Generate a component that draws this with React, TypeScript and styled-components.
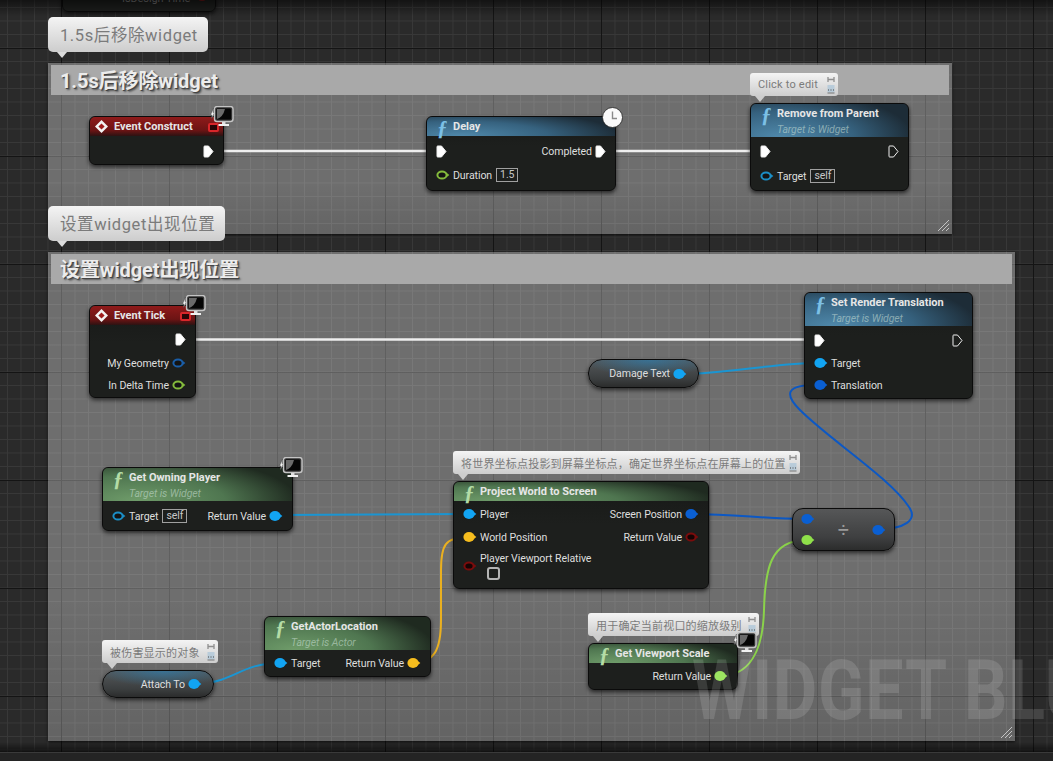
import React from "react";
import styled, { createGlobalStyle } from "styled-components";

const GlobalStyle = createGlobalStyle`
  html, body { margin: 0; padding: 0; background: #232323; }
  body { font-family: Roboto, "Noto Sans CJK SC", sans-serif; }
`;

const Page = styled.div`
  width: 1053px;
  height: 761px;
  display: flex;
  flex-direction: column;
  overflow: hidden;
`;

const Canvas = styled.div`
  position: relative;
  flex: 1;
  overflow: hidden;
  background-color: #2a2a2a;
  background-image:
    linear-gradient(to right, #141414 1px, transparent 1px),
    linear-gradient(to bottom, #141414 1px, transparent 1px),
    linear-gradient(to right, #383838 1px, transparent 1px),
    linear-gradient(to bottom, #383838 1px, transparent 1px);
  background-size: 108px 108px, 108px 108px, 13.5px 13.5px, 13.5px 13.5px;
  background-position: 61px 48px, 61px 48px, 7px 7px, 7px 7px;
  &::after {
    content: "";
    position: absolute;
    inset: 0;
    pointer-events: none;
    background:
      linear-gradient(to bottom, rgba(0, 0, 0, 0.55), transparent 16px),
      linear-gradient(to top, rgba(0, 0, 0, 0.6), transparent 10px);
  }
`;

const StatusBar = styled.div`
  height: 8px;
  background: #242424;
  border-top: 1px solid #3a3a3a;
`;

const Comment = styled.div<{ $x: number; $y: number; $w: number; $h: number }>`
  position: absolute;
  left: ${(p) => p.$x}px;
  top: ${(p) => p.$y}px;
  width: ${(p) => p.$w}px;
  height: ${(p) => p.$h}px;
  box-sizing: border-box;
  padding: 2px 3px;
  background: linear-gradient(to bottom, rgba(255, 255, 255, 0.32) 70%, rgba(255, 255, 255, 0.27));
  box-shadow: 0 1px 3px rgba(0, 0, 0, 0.7);
`;

const CommentTitle = styled.div`
  height: 30px;
  line-height: 32px;
  padding-left: 9px;
  background: #a9a9a9;
  color: #ececec;
  font-size: 20px;
  font-weight: 700;
  letter-spacing: -0.1px;
  text-shadow: 1px 1px 0 #444, 2px 2px 2px rgba(0, 0, 0, 0.5);
`;

const ResizeGrip = styled.svg`
  position: absolute;
  right: 2px;
  bottom: 2px;
`;

const Wires = styled.svg`
  position: absolute;
  left: 0;
  top: 0;
`;

const Node = styled.div<{ $x: number; $y: number; $w: number; $h: number }>`
  position: absolute;
  left: ${(p) => p.$x}px;
  top: ${(p) => p.$y}px;
  width: ${(p) => p.$w}px;
  height: ${(p) => p.$h}px;
  box-sizing: border-box;
  border: 1px solid #0b0b0b;
  border-radius: 6px;
  background: linear-gradient(to bottom, #171917, #1d1f1d 40%);
  box-shadow: 0 2px 4px rgba(0, 0, 0, 0.65);
  color: #dedede;
  font-size: 10.6px;
  letter-spacing: -0.1px;
`;

const headerColors = {
  red: "linear-gradient(to bottom, #8f1a1a, #6c1414 70%, #2c1212)",
  blue: "radial-gradient(ellipse 85% 140% at 18% 100%, #4f88aa, #36627f 55%, #1d2c37 100%)",
  green: "radial-gradient(ellipse 85% 140% at 18% 100%, #6f9c6a, #4f7650 55%, #1f2a20 100%)",
};

const Header = styled.div<{ $tone: keyof typeof headerColors; $h: number }>`
  height: ${(p) => p.$h}px;
  box-sizing: border-box;
  display: flex;
  align-items: flex-start;
  padding: 2px 6px 0 ${(p) => (p.$tone === "red" ? 4 : 10)}px;
  gap: ${(p) => (p.$tone === "red" ? 5 : 3)}px;
  border-radius: 5px 5px 0 0;
  background: ${(p) => headerColors[p.$tone]};
`;

const FuncIcon = styled.span<{ $tone: "blue" | "green" }>`
  font-family: "Liberation Serif", serif;
  font-style: italic;
  font-weight: 700;
  font-size: 21px;
  line-height: 18px;
  width: 13px;
  color: ${(p) => (p.$tone === "blue" ? "#7cc0e6" : "#b4dca6")};
`;

const HeaderText = styled.div`
  display: flex;
  flex-direction: column;
`;

const Title = styled.span`
  font-weight: 700;
  font-size: 11px;
  letter-spacing: 0;
  line-height: 16px;
  color: #e6e6e6;
  white-space: nowrap;
`;

const Subtitle = styled.span`
  font-style: italic;
  font-size: 10.5px;
  line-height: 15px;
  color: rgba(205, 225, 215, 0.55);
  white-space: nowrap;
`;

const Body = styled.div`
  padding: 0 9px;
`;

const Row = styled.div<{ $h: number }>`
  height: ${(p) => p.$h}px;
  display: flex;
  align-items: center;
  justify-content: space-between;
  white-space: nowrap;
`;

const Side = styled.div`
  display: flex;
  align-items: center;
  gap: 3px;
`;

const Literal = styled.span`
  border: 1px solid #a0a0a0;
  line-height: 12px;
  padding: 0 3px;
  margin-left: 1px;
  font-size: 10.5px;
  color: #c8c8c8;
`;

const Checkbox = styled.span`
  display: block;
  width: 9px;
  height: 9px;
  margin: 2px 0 0 7px;
  border: 2px solid #b4b4b4;
  border-radius: 3px;
`;

const StackedPin = styled.div`
  display: flex;
  align-items: center;
  gap: 3px;
  margin-top: 5px;
  white-space: nowrap;
`;

const DelegatePin = styled.span`
  position: absolute;
  right: 4px;
  top: 6px;
  width: 7px;
  height: 5px;
  border: 2px solid #d8262a;
  border-radius: 2px;
  background: #2a0606;
`;

const Badge = styled.span<{ $right: number; $top: number }>`
  position: absolute;
  right: ${(p) => p.$right}px;
  top: ${(p) => p.$top}px;
  display: flex;
`;

const Pill = styled.div<{ $x: number; $y: number; $w: number; $h: number }>`
  position: absolute;
  left: ${(p) => p.$x}px;
  top: ${(p) => p.$y}px;
  width: ${(p) => p.$w}px;
  height: ${(p) => p.$h}px;
  box-sizing: border-box;
  display: flex;
  align-items: center;
  justify-content: flex-end;
  gap: 3px;
  padding-right: 11px;
  border: 1px solid #0b0b0b;
  border-radius: 14px;
  background:
    radial-gradient(ellipse 60% 60% at 55% 0%, rgba(40, 130, 185, 0.6), transparent),
    linear-gradient(to bottom, #54585a, #3b3e3f 70%, #2b2c2c);
  box-shadow: 0 2px 4px rgba(0, 0, 0, 0.65);
  color: #dedede;
  font-size: 10.6px;
  letter-spacing: -0.1px;
`;

const DivideNode = styled.div<{ $x: number; $y: number }>`
  position: absolute;
  left: ${(p) => p.$x}px;
  top: ${(p) => p.$y}px;
  width: 103px;
  height: 43px;
  box-sizing: border-box;
  display: flex;
  align-items: center;
  justify-content: space-between;
  padding: 0 8px 0 8px;
  border: 1px solid #0b0b0b;
  border-radius: 11px;
  background: linear-gradient(to bottom, #565758, #3e3f40 70%, #2b2c2c);
  box-shadow: 0 2px 4px rgba(0, 0, 0, 0.65);
`;

const DivideInputs = styled.div`
  display: flex;
  flex-direction: column;
  gap: 9px;
`;

const DivideSign = styled.span`
  font-size: 20px;
  line-height: 20px;
  color: #9a9a9a;
`;

const Bubble = styled.div<{ $x: number; $y: number; $w: number; $big?: boolean }>`
  position: absolute;
  left: ${(p) => p.$x}px;
  top: ${(p) => p.$y}px;
  width: ${(p) => p.$w}px;
  height: ${(p) => (p.$big ? 35 : 23)}px;
  box-sizing: border-box;
  display: flex;
  align-items: center;
  justify-content: space-between;
  padding: 0 ${(p) => (p.$big ? 10 : 3)}px ${(p) => (p.$big ? 2 : 0)}px ${(p) => (p.$big ? 12 : 8)}px;
  border-radius: ${(p) => (p.$big ? 5 : 3)}px;
  background: linear-gradient(to bottom, #f4f4f4, #cdcdcd);
  color: #7b7b7b;
  font-size: ${(p) => (p.$big ? 16.5 : 11)}px;
  letter-spacing: ${(p) => (p.$big ? 0.6 : 0.2)}px;
  white-space: nowrap;
  &::after {
    content: "";
    position: absolute;
    left: ${(p) => (p.$big ? 9 : 5)}px;
    top: 100%;
    border: 5px solid transparent;
    border-top: 6px solid ${(p) => (p.$big ? "#dcdcdc" : "#cdcdcd")};
    border-bottom: 0;
  }
`;

const Watermark = styled.div`
  position: absolute;
  left: 692px;
  top: 641px;
  font-family: Roboto, sans-serif;
  font-weight: 700;
  font-size: 84px;
  line-height: 100px;
  letter-spacing: 1px;
  white-space: nowrap;
  color: rgba(255, 255, 255, 0.13);
  transform: scaleX(0.81);
  transform-origin: left top;
  pointer-events: none;
`;

const CutText = styled.span`
  position: absolute;
  left: 59px;
  top: 31px;
  font-size: 11px;
  line-height: 14px;
  color: #7d7d7d;
`;

const CutPin = styled.span`
  position: absolute;
  left: 135px;
  top: 34px;
  width: 8px;
  height: 6px;
  border-radius: 50%;
  background: #7a1818;
`;

const C = {
  object: "#12a4f2",
  objectRing: "#1b8ec6",
  vector: "#0a5fd2",
  geometry: "#1a5ea8",
  float: "#8fe04a",
  floatRing: "#84bb3c",
  yellow: "#f6bd1e",
  bool: "#7a0c0c",
};

function DataPin({ color, hollow }: { color: string; hollow?: boolean }) {
  return (
    <svg width="14" height="12" viewBox="0 0 14 12">
      <path d="M10 3.6 L13.4 6 L10 8.4 Z" fill={color} />
      {hollow ? (
        <ellipse cx="6" cy="6" rx="4.6" ry="3.6" fill="#141414" stroke={color} strokeWidth="2" />
      ) : (
        <ellipse cx="6" cy="6" rx="5.6" ry="4.9" fill={color} />
      )}
    </svg>
  );
}

function BoolPin() {
  return (
    <svg width="14" height="12" viewBox="0 0 14 12">
      <path d="M10 3.6 L13.4 6 L10 8.4 Z" fill={C.bool} />
      <ellipse cx="6" cy="6" rx="4.6" ry="3.6" fill="#160404" stroke={C.bool} strokeWidth="2" />
    </svg>
  );
}

function ExecPin({ hollow }: { hollow?: boolean }) {
  return (
    <svg width="11" height="13" viewBox="0 0 11 13">
      <path
        d="M1.5 1 H5.5 L10 6.5 L5.5 12 H1.5 Q1 12 1 11 V2 Q1 1 1.5 1 Z"
        fill={hollow ? "none" : "#fff"}
        stroke="#f0f0f0"
        strokeWidth="1"
      />
    </svg>
  );
}

function MonitorBadge() {
  return (
    <svg width="25" height="22" viewBox="0 0 25 22">
      <path d="M4.5 2 L1.5 9 H3 L2.5 13 L5.5 6.5 H4 Z" fill="#f2f2f2" stroke="#333" strokeWidth="0.4" />
      <rect x="5.5" y="0.5" width="18.5" height="15" rx="2.5" fill="#333" stroke="#c4c4c4" strokeWidth="1.4" />
      <rect x="7.5" y="2.5" width="14.5" height="11" rx="1" fill="#050505" />
      <path d="M8 13 Q14 11 16 3 H8 Z" fill="#6a6a6a" />
      <rect x="13" y="16" width="3.5" height="2" fill="#dedede" />
      <rect x="9.5" y="18" width="10.5" height="2" fill="#f2f2f2" />
    </svg>
  );
}

function ClockBadge() {
  return (
    <svg width="21" height="21" viewBox="0 0 21 21">
      <circle cx="10.5" cy="10.5" r="10" fill="#fafafa" stroke="#222" strokeWidth="0.8" />
      <path d="M10.5 4.5 V11.5 H15" fill="none" stroke="#8a8a8a" strokeWidth="1.4" />
    </svg>
  );
}

function EventIcon() {
  return (
    <svg width="15" height="15" viewBox="0 0 15 15">
      <path d="M7.5 1 L14 7.5 L7.5 14 L1 7.5 Z" fill="#f4f4f4" />
      <path d="M7.5 4.4 L10.6 7.5 L7.5 10.6 L4.4 7.5 Z" fill="#a01e1e" />
    </svg>
  );
}

function BubbleIcons() {
  return (
    <svg width="8" height="20" viewBox="0 0 8 20">
      <path d="M1 2 V7 M7 2 V7 M1.5 4.5 H6.5" stroke="#8f8f8f" strokeWidth="1.3" fill="none" />
      <rect x="0.5" y="10" width="7" height="7.5" fill="#a9c4d8" opacity="0.7" />
      <path d="M1 15 H2 M3.5 15 H4.5 M6 15 H7" stroke="#444" strokeWidth="1" />
      <path d="M0.5 18 H7.5" stroke="#777" strokeWidth="1" />
    </svg>
  );
}

function Grip() {
  return (
    <ResizeGrip width="13" height="13" viewBox="0 0 13 13">
      <path d="M1 12 L12 1 M5 12 L12 5 M9 12 L12 9" stroke="#c4c4c4" strokeWidth="1" />
    </ResizeGrip>
  );
}

const Label = styled.span``;

export default function App() {
  return (
    <Page>
      <GlobalStyle />
      <Canvas>
        <Node $x={62} $y={-40} $w={154} $h={52}>
          <CutText>IsDesign Time</CutText>
          <CutPin />
        </Node>

        <Comment $x={48} $y={63} $w={904} $h={171}>
          <CommentTitle>1.5s后移除widget</CommentTitle>
          <Grip />
        </Comment>
        <Comment $x={48} $y={252} $w={967} $h={489}>
          <CommentTitle>设置widget出现位置</CommentTitle>
          <Grip />
        </Comment>

        <Wires width="1053" height="752" viewBox="0 0 1053 752" fill="none">
          <g stroke="#eeeeee" strokeWidth="2.6">
            <path d="M222 151 H430" />
            <path d="M612 151 H756" />
            <path d="M194 339.5 H810" />
          </g>
          <g stroke="#1a95d2" strokeWidth="2">
            <path d="M277 515 C 340 515, 400 514, 469 514" />
            <path d="M682 374 C 730 374, 770 363, 820 363" />
            <path d="M195 684 C 232 684, 240 663, 280 663" />
          </g>
          <g stroke="#0c58c4" strokeWidth="2">
            <path d="M690 514 C 740 514, 760 519, 806 519" />
            <path d="M878 529 C 905 529, 918 520, 909 507 C 890 478, 830 440, 800 410 C 784 394, 786 385, 816 385" />
          </g>
          <path d="M413 663 C 434 663, 441 650, 441 620 L441 570 C 441 545, 445 537, 469 537" stroke="#eab020" strokeWidth="2" />
          <path d="M720 676 C 750 676, 763 650, 764 610 C 765 570, 770 540, 806 540" stroke="#8ad24a" strokeWidth="2" />
        </Wires>

        <Bubble $x={48} $y={17} $w={160} $big>1.5s后移除widget</Bubble>
        <Bubble $x={48} $y={206} $w={177} $big>设置widget出现位置</Bubble>

        <Node $x={89} $y={116} $w={135} $h={49}>
          <Header $tone="red" $h={19}>
            <EventIcon />
            <Title>Event Construct</Title>
          </Header>
          <Body>
            <Row $h={30}>
              <span />
              <ExecPin />
            </Row>
          </Body>
          <DelegatePin />
          <Badge $right={-11} $top={-11}><MonitorBadge /></Badge>
        </Node>

        <Node $x={426} $y={116} $w={190} $h={75}>
          <Header $tone="blue" $h={19}>
            <FuncIcon $tone="blue">ƒ</FuncIcon>
            <Title>Delay</Title>
          </Header>
          <Body>
            <Row $h={30}>
              <ExecPin />
              <Side>
                <Label>Completed</Label>
                <ExecPin />
              </Side>
            </Row>
            <Row $h={18}>
              <Side>
                <DataPin color={C.floatRing} hollow />
                <Label>Duration</Label>
                <Literal>1.5</Literal>
              </Side>
            </Row>
          </Body>
          <Badge $right={-8} $top={-10}><ClockBadge /></Badge>
        </Node>

        <Node $x={750} $y={103} $w={159} $h={88}>
          <Header $tone="blue" $h={33}>
            <FuncIcon $tone="blue">ƒ</FuncIcon>
            <HeaderText>
              <Title>Remove from Parent</Title>
              <Subtitle>Target is Widget</Subtitle>
            </HeaderText>
          </Header>
          <Body>
            <Row $h={28}>
              <ExecPin />
              <ExecPin hollow />
            </Row>
            <Row $h={22}>
              <Side>
                <DataPin color={C.objectRing} hollow />
                <Label>Target</Label>
                <Literal>self</Literal>
              </Side>
            </Row>
          </Body>
        </Node>
        <Bubble $x={750} $y={73} $w={88}>
          Click to edit
          <BubbleIcons />
        </Bubble>

        <Node $x={89} $y={305} $w={107} $h={93}>
          <Header $tone="red" $h={19}>
            <EventIcon />
            <Title>Event Tick</Title>
          </Header>
          <Body>
            <Row $h={28}>
              <span />
              <ExecPin />
            </Row>
            <Row $h={20}>
              <span />
              <Side>
                <Label>My Geometry</Label>
                <DataPin color={C.geometry} hollow />
              </Side>
            </Row>
            <Row $h={24}>
              <span />
              <Side>
                <Label>In Delta Time</Label>
                <DataPin color={C.floatRing} hollow />
              </Side>
            </Row>
          </Body>
          <DelegatePin />
          <Badge $right={-11} $top={-11}><MonitorBadge /></Badge>
        </Node>

        <Node $x={804} $y={292} $w={169} $h={107}>
          <Header $tone="blue" $h={33}>
            <FuncIcon $tone="blue">ƒ</FuncIcon>
            <HeaderText>
              <Title>Set Render Translation</Title>
              <Subtitle>Target is Widget</Subtitle>
            </HeaderText>
          </Header>
          <Body>
            <Row $h={28}>
              <ExecPin />
              <ExecPin hollow />
            </Row>
            <Row $h={18}>
              <Side>
                <DataPin color={C.object} />
                <Label>Target</Label>
              </Side>
            </Row>
            <Row $h={26}>
              <Side>
                <DataPin color={C.vector} />
                <Label>Translation</Label>
              </Side>
            </Row>
          </Body>
        </Node>

        <Pill $x={588} $y={359} $w={111} $h={29}>
          <Label>Damage Text</Label>
          <DataPin color={C.object} />
        </Pill>

        <Node $x={102} $y={467} $w={191} $h={64}>
          <Header $tone="green" $h={33}>
            <FuncIcon $tone="green">ƒ</FuncIcon>
            <HeaderText>
              <Title>Get Owning Player</Title>
              <Subtitle>Target is Widget</Subtitle>
            </HeaderText>
          </Header>
          <Body>
            <Row $h={30}>
              <Side>
                <DataPin color={C.objectRing} hollow />
                <Label>Target</Label>
                <Literal>self</Literal>
              </Side>
              <Side>
                <Label>Return Value</Label>
                <DataPin color={C.object} />
              </Side>
            </Row>
          </Body>
          <Badge $right={-11} $top={-11}><MonitorBadge /></Badge>
        </Node>

        <Node $x={453} $y={481} $w={256} $h={108}>
          <Header $tone="green" $h={19}>
            <FuncIcon $tone="green">ƒ</FuncIcon>
            <Title>Project World to Screen</Title>
          </Header>
          <Body>
            <Row $h={26}>
              <Side>
                <DataPin color={C.object} />
                <Label>Player</Label>
              </Side>
              <Side>
                <Label>Screen Position</Label>
                <DataPin color={C.vector} />
              </Side>
            </Row>
            <Row $h={20}>
              <Side>
                <DataPin color={C.yellow} />
                <Label>World Position</Label>
              </Side>
              <Side>
                <Label>Return Value</Label>
                <BoolPin />
              </Side>
            </Row>
            <StackedPin>
              <BoolPin />
              <div>
                <Label>Player Viewport Relative</Label>
                <Checkbox />
              </div>
            </StackedPin>
          </Body>
        </Node>
        <Bubble $x={453} $y={451} $w={347}>
          将世界坐标点投影到屏幕坐标点，确定世界坐标点在屏幕上的位置
          <BubbleIcons />
        </Bubble>

        <DivideNode $x={792} $y={508}>
          <DivideInputs>
            <DataPin color={C.vector} />
            <DataPin color={C.float} />
          </DivideInputs>
          <DivideSign>÷</DivideSign>
          <DataPin color={C.vector} />
        </DivideNode>

        <Node $x={264} $y={616} $w={167} $h={61}>
          <Header $tone="green" $h={33}>
            <FuncIcon $tone="green">ƒ</FuncIcon>
            <HeaderText>
              <Title>GetActorLocation</Title>
              <Subtitle>Target is Actor</Subtitle>
            </HeaderText>
          </Header>
          <Body>
            <Row $h={26}>
              <Side>
                <DataPin color={C.object} />
                <Label>Target</Label>
              </Side>
              <Side>
                <Label>Return Value</Label>
                <DataPin color={C.yellow} />
              </Side>
            </Row>
          </Body>
        </Node>

        <Pill $x={102} $y={670} $w={112} $h={28}>
          <Label>Attach To</Label>
          <DataPin color={C.object} />
        </Pill>
        <Bubble $x={102} $y={640} $w={116}>
          被伤害显示的对象
          <BubbleIcons />
        </Bubble>

        <Node $x={588} $y={643} $w={150} $h={47}>
          <Header $tone="green" $h={19}>
            <FuncIcon $tone="green">ƒ</FuncIcon>
            <Title>Get Viewport Scale</Title>
          </Header>
          <Body>
            <Row $h={26}>
              <span />
              <Side>
                <Label>Return Value</Label>
                <DataPin color={C.float} />
              </Side>
            </Row>
          </Body>
        </Node>
        <Bubble $x={588} $y={613} $w={171}>
          用于确定当前视口的缩放级别
          <BubbleIcons />
        </Bubble>
        <Badge $right={296} $top={632}><MonitorBadge /></Badge>

        <Watermark>WIDGET BLUEPRINT</Watermark>
      </Canvas>
      <StatusBar />
    </Page>
  );
}
